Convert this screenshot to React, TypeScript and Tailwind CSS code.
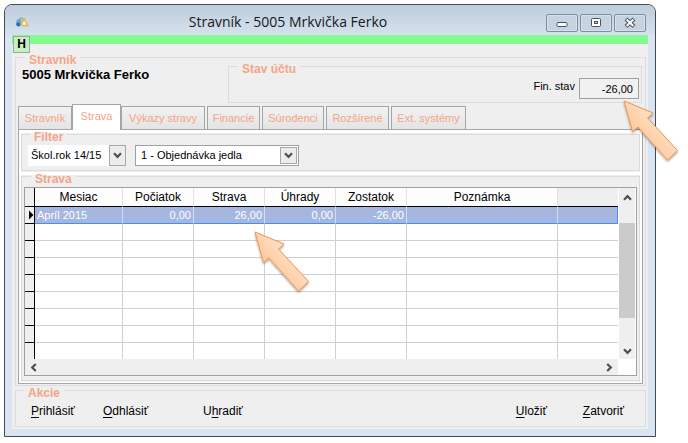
import type { ReactNode } from "react";

const tabs = ["Stravník", "Strava", "Výkazy stravy", "Financie", "Súrodenci", "Rozšírené", "Ext. systémy"];
const tabWidths = ["w-[54px]", "w-[49px]", "w-[84px]", "w-[53px]", "w-[62px]", "w-[63px]", "w-[75px]"];
const tabGaps = ["", "", "", "ml-[2px]", "ml-[2px]", "ml-[2px]", "ml-[2px]"];

const columns = ["Mesiac", "Počiatok", "Strava", "Úhrady", "Zostatok", "Poznámka"];
const record = ["Apríl 2015", "0,00", "26,00", "0,00", "-26,00", ""];
const emptyRows = [1, 2, 3, 4, 5, 6, 7, 8];

function Legend({ children, indent = "ml-[9px]" }: { children: ReactNode; indent?: string }) {
  return (
    <legend className={`${indent} h-px px-1 text-[12px] leading-[7px] font-bold text-[#f4a587]`}>{children}</legend>
  );
}

function Chevron({ className = "" }: { className?: string }) {
  return (
    <svg className={className} width="9" height="7" viewBox="0 0 9 7" fill="none" stroke="#505050" strokeWidth="2.2">
      <path d="M1 1.2 4.5 4.8 8 1.2" />
    </svg>
  );
}

function Select({ label, value, className, flat }: { label: string; value: string; className: string; flat?: boolean }) {
  return (
    <div className={`relative h-[21px] bg-white ${flat ? "" : "border border-[#a0a0a0]"} ${className}`}>
      <select
        aria-label={label}
        className={`block h-full w-full appearance-none pr-5 text-[11px] text-black outline-none ${flat ? "pl-[3px]" : "pl-[5px]"}`}
      >
        <option>{value}</option>
      </select>
      <span
        className={`pointer-events-none absolute flex w-[17px] items-center justify-center border border-[#a8a8a8] bg-[#ececec] ${
          flat ? "inset-y-0 right-0" : "inset-y-px right-px"
        }`}
      >
        <Chevron />
      </span>
    </div>
  );
}

function Pointer({ className }: { className: string }) {
  return (
    <svg className={`pointer-events-none absolute z-10 ${className}`} width="62" height="66" viewBox="0 0 62 66" aria-hidden="true">
      <defs>
        <linearGradient id="pointerFill" x1="0" y1="1" x2="1" y2="0">
          <stop offset="0.2" stopColor="#fbc08f" />
          <stop offset="0.6" stopColor="#ffdcbd" />
        </linearGradient>
        <filter id="pointerShadow" x="-20%" y="-20%" width="150%" height="150%">
          <feDropShadow dx="0" dy="1.5" stdDeviation="1" floodColor="#000" floodOpacity="0.35" />
        </filter>
      </defs>
      <path
        d="M2 2 31 14 25.5 19 55.5 51.5 45.5 61 16 28 10.5 32.5Z"
        fill="url(#pointerFill)"
        stroke="#f0954f"
        strokeWidth="1"
        strokeLinejoin="round"
        filter="url(#pointerShadow)"
      />
    </svg>
  );
}

function WindowButton({ label, children }: { label: string; children: ReactNode }) {
  return (
    <button
      aria-label={label}
      className="flex h-[18px] w-8 items-center justify-center rounded-[2px] border border-[#7d8ea3] bg-[#c6d3e1] shadow-[inset_0_0_0_1px_#d6e1ec]"
    >
      <svg width="14" height="12" viewBox="0 0 14 12" fill="none">
        {children}
      </svg>
    </button>
  );
}

function Action({ before = "", hot, after, className = "" }: { before?: string; hot: string; after: string; className?: string }) {
  return (
    <button className={`text-left text-[12px] leading-4 text-black ${className}`}>
      {before}
      <span className="underline underline-offset-2">{hot}</span>
      {after}
    </button>
  );
}

export default function App() {
  return (
    <main className="overflow-hidden bg-white pt-1 pr-8 pb-1 pl-1 font-['Liberation_Sans',Arial,sans-serif]">
      <section className="rounded-t-lg border border-[#444b55] bg-[#d9e5f0] px-[7px] pb-[7px]">
        <header className="-mx-[7px] flex h-[30px] items-center rounded-t-[7px] bg-linear-to-b from-[#bfccdb] to-[#d5e1ee] pr-[9px] pl-[10px]">
          <svg width="15" height="12" viewBox="0 0 15 12" className="mt-1 shrink-0" aria-hidden="true">
            <path d="M5 1.5 8 0.8 9 4 6 7Z" fill="#9fd08c" />
            <path d="M1.5 4.5 5.5 1.5 6 7 3.5 10.5 0.8 8.5Z" fill="#6fa4e0" />
            <path d="M9 2.5 12.8 9.5H6Z" fill="#fff4cf" stroke="#e0b55a" strokeWidth="1.5" strokeLinejoin="round" />
            <circle cx="3.4" cy="8.4" r="2" fill="#2d68bd" />
          </svg>
          <h1 className="min-w-0 flex-1 pt-1 text-center font-['Open_Sans','Noto_Sans',sans-serif] text-[14px] leading-5 text-[#16181c]">
            Stravník - 5005 Mrkvička Ferko
          </h1>
          <div className="flex shrink-0 gap-[2px] pt-[6px]">
            <WindowButton label="Minimalizovať">
              <rect x="2" y="5.5" width="10" height="4" rx="1" fill="#fff" stroke="#4b5361" />
            </WindowButton>
            <WindowButton label="Maximalizovať">
              <rect x="2.5" y="1.5" width="9" height="8" rx="1" fill="#fff" stroke="#4b5361" />
              <rect x="5.5" y="4.5" width="3" height="2" fill="#c6d3e1" stroke="#4b5361" />
            </WindowButton>
            <WindowButton label="Zavrieť">
              <path d="M3 2 11 9.5M11 2 3 9.5" stroke="#4b5361" strokeWidth="4" />
              <path d="M3.6 2.6 10.4 8.9M10.4 2.6 3.6 8.9" stroke="#fff" strokeWidth="2" />
            </WindowButton>
          </div>
        </header>

        <div className="bg-[#efefef] pb-[2px]">
          <div className="relative h-[9px] bg-[#84fb8d]">
            <button className="absolute top-px left-px h-[17px] w-[17px] border border-[#9aa89a] bg-[#c4f0c4] text-center text-[12px] leading-[15px] font-bold text-black">
              H
            </button>
          </div>

          <div className="pt-[13px] pr-[2px] pl-[3px]">
            <fieldset className="min-w-0 border border-[#dcdcdc] px-[2px] pb-px">
              <Legend indent="ml-[7px]">Stravník</Legend>
              <div className="flex h-[46px] justify-between">
                <h2 className="w-[210px] shrink-0 pt-[9px] pl-1 text-[13px] leading-4 font-bold text-black">5005 Mrkvička Ferko</h2>
                <fieldset className="mt-2 mr-px h-[37px] min-w-0 flex-1 border border-[#dcdcdc] pr-[2px]">
                  <Legend>Stav účtu</Legend>
                  <div className="flex items-start justify-end gap-1 pt-[11px] text-[11px] text-black">
                    <label htmlFor="balance" className="leading-4">
                      Fin. stav
                    </label>
                    <div className="relative">
                      <input
                        id="balance"
                        readOnly
                        defaultValue="-26,00"
                        className="block h-[21px] w-[60px] border border-[#a0a0a0] bg-[#f1f1f1] pr-[5px] text-right text-[11px] outline-none"
                      />
                      <Pointer className="top-[21px] left-[43px]" />
                    </div>
                  </div>
                </fieldset>
              </div>

              <div role="tablist" className="flex h-[25px] items-end">
                {tabs.map((tab, i) => (
                  <button
                    key={tab}
                    role="tab"
                    aria-selected={i === 1}
                    className={`shrink-0 border border-b-0 border-[#a5a5a5] text-center text-[11px] whitespace-nowrap text-[#f4a587] ${tabWidths[i]} ${tabGaps[i]} ${
                      i === 1 ? "z-10 -mb-px h-[26px] bg-white pb-[2px]" : "h-[23px] bg-linear-to-b from-[#f2f2f2] to-[#e4e4e4]"
                    }`}
                  >
                    {tab}
                  </button>
                ))}
              </div>

              <div role="tabpanel" aria-label="Strava" className="flex flex-col gap-[3px] border border-[#a5a5a5] bg-white px-[2px] pt-[3px] pb-px">
                <div className="bg-[#efefef] py-px">
                  <fieldset className="h-[37px] min-w-0 border border-[#dcdcdc] pl-[6px]">
                    <Legend indent="ml-[2px]">Filter</Legend>
                    <div className="flex gap-[9px] pt-[10px]">
                      <Select flat label="Školský rok" value="Škol.rok 14/15" className="w-[98px]" />
                      <Select label="Typ" value="1 - Objednávka jedla" className="w-[164px]" />
                    </div>
                  </fieldset>
                </div>

                <div className="bg-[#efefef] py-px">
                  <fieldset className="min-w-0 border border-[#dcdcdc] px-[2px] pb-1">
                    <Legend indent="ml-[7px]">Strava</Legend>
                    <div className="relative mt-[10px] border border-[#a0a0a0] bg-white">
                      <div className="flex">
                        <table className="min-w-0 flex-1 table-fixed border-separate border-spacing-0">
                          <colgroup>
                            <col className="w-[10px]" />
                            <col className="w-[88px]" />
                            <col className="w-[71px]" />
                            <col className="w-[71px]" />
                            <col className="w-[71px]" />
                            <col className="w-[71px]" />
                            <col />
                            <col className="w-[60px]" />
                          </colgroup>
                          <thead>
                            <tr className="h-[19px] text-[12px] leading-4 text-black">
                              <th className="border-r border-b border-black bg-[#efefef] p-0" />
                              {columns.map((name) => (
                                <th key={name} className="border-r border-b border-r-[#e2e2e2] border-b-black bg-[#fdfdfd] p-0 font-normal">
                                  {name}
                                </th>
                              ))}
                              <th className="border-b border-black bg-[#efefef] p-0" />
                            </tr>
                          </thead>
                          <tbody>
                            <tr className="h-[17px] text-[11px] leading-4 text-white">
                              <td className="border-r border-b border-black bg-[#efefef] p-0">
                                <svg width="9" height="10" viewBox="0 0 9 10" className="block" aria-label="Aktuálny záznam">
                                  <path d="M4 0.5 8.5 5 4 9.5Z" fill="#000" />
                                </svg>
                              </td>
                              {record.map((value, i) => (
                                <td
                                  key={columns[i]}
                                  className={`border-r border-b border-r-[#d3dcf0] border-b-[#4a8fe2] bg-[#a5b7e0] p-0 ${i === 0 ? "pl-[2px]" : "pr-[2px] text-right"}`}
                                >
                                  {value}
                                </td>
                              ))}
                              <td className="border-r border-b border-[#4a8fe2] bg-[#a5b7e0] p-0" />
                            </tr>
                            {emptyRows.map((row) => {
                              const last = row === emptyRows.length;
                              const line = last ? "" : "border-b";
                              return (
                                <tr key={row} className={last ? "h-4" : "h-[17px]"}>
                                  <td className={`border-r border-black bg-[#efefef] p-0 ${line}`} />
                                  {columns.map((name) => (
                                    <td key={name} className={`border-r border-[#d0d0d0] p-0 ${line}`} />
                                  ))}
                                  <td className={`border-[#d0d0d0] p-0 ${line}`} />
                                </tr>
                              );
                            })}
                          </tbody>
                        </table>
                        <div className="mr-px ml-px flex w-4 shrink-0 flex-col items-center bg-[#efefef]">
                          <div className="flex h-[35px] pt-[6px]">
                            <Chevron className="rotate-180" />
                          </div>
                          <div className="h-[95px] w-full bg-[#cbcbcb]" />
                          <div className="flex flex-1 items-end pb-1">
                            <Chevron />
                          </div>
                        </div>
                      </div>
                      <div className="mr-[18px] flex h-4 items-center justify-between bg-[#efefef] px-1">
                        <Chevron className="rotate-90" />
                        <Chevron className="-rotate-90" />
                      </div>
                      <Pointer className="top-[42px] left-[228px]" />
                    </div>
                  </fieldset>
                </div>
              </div>
            </fieldset>

            <fieldset className="mt-1 h-[37px] min-w-0 border border-[#dcdcdc]">
              <Legend indent="ml-2">Akcie</Legend>
              <div className="flex pt-[12px] pr-[21px] pl-[15px]">
                <Action hot="P" after="rihlásiť" className="w-[72px]" />
                <Action hot="O" after="dhlásiť" className="w-[100px]" />
                <Action before="U" hot="h" after="radiť" />
                <div className="ml-auto flex">
                  <Action hot="U" after="ložiť" className="w-[67px]" />
                  <Action hot="Z" after="atvoriť" />
                </div>
              </div>
            </fieldset>
          </div>
        </div>
      </section>
    </main>
  );
}
